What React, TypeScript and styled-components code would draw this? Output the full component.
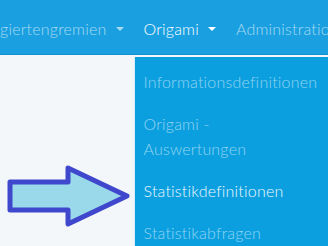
import React from "react";
import styled, { createGlobalStyle } from "styled-components";

const Global = createGlobalStyle`
  html, body { margin: 0; padding: 0; }
  body {
    background: #f4f7fa;
    font-family: "Lato", "Open Sans", sans-serif;
    width: 328px;
    height: 246px;
    overflow: hidden;
  }
`;

const Page = styled.div`
  position: relative;
  width: 328px;
  height: 246px;
  overflow: hidden;
`;

const NavBar = styled.nav`
  height: 55px;
  background: #1a9fe0;
  border-bottom: 1px solid #1590cf;
  display: flex;
  align-items: center;
  padding-top: 3px;
  box-sizing: border-box;
`;

const NavList = styled.ul`
  list-style: none;
  margin: 0 0 0 -43px;
  padding: 0;
  display: flex;
  align-items: center;
  white-space: nowrap;
`;

const NavItem = styled.li<{ $active?: boolean }>`
  position: relative;
  padding: 0 10px;
  font-size: 16px;
  font-weight: 300;
  letter-spacing: 0.2px;
  color: ${(p) => (p.$active ? "#ffffff" : "rgba(255,255,255,0.62)")};
  display: flex;
  align-items: center;
  gap: 9px;
`;

const Caret = styled.span`
  width: 0;
  height: 0;
  border-left: 4px solid transparent;
  border-right: 4px solid transparent;
  border-top: 4px solid currentColor;
  margin-top: 1px;
`;

const Dropdown = styled.ul`
  position: absolute;
  top: 38px;
  left: 0;
  width: 220px;
  margin: 0;
  padding: 3.5px 0;
  list-style: none;
  background: #0c9fe0;
  border-left: 1px solid #d7eefa;
`;

const DropItem = styled.li<{ $highlight?: boolean }>`
  padding: 8.5px 9px;
  font-size: 16px;
  font-weight: 300;
  letter-spacing: 0.2px;
  line-height: 25px;
  width: 165px;
  white-space: normal;
  color: ${(p) => (p.$highlight ? "#eef8fd" : "rgba(255,255,255,0.55)")};
`;

const Arrow = styled.svg`
  position: absolute;
  left: 0;
  top: 160px;
`;

export default function App() {
  return (
    <Page>
      <Global />
      <NavBar>
        <NavList>
          <NavItem>
            Delegiertengremien <Caret />
          </NavItem>
          <NavItem $active>
            Origami <Caret />
            <Dropdown>
              <DropItem>Informationsdefinitionen</DropItem>
              <DropItem>Origami - Auswertungen</DropItem>
              <DropItem $highlight>Statistikdefinitionen</DropItem>
              <DropItem>Statistikabfragen</DropItem>
            </Dropdown>
          </NavItem>
          <NavItem>Administration</NavItem>
        </NavList>
      </NavBar>
      <Arrow width="140" height="72" viewBox="0 160 140 72">
        <polygon
          points="10,182 68,182 68,168 127,196 68,224 68,210 10,210"
          fill="#99d9ea"
          stroke="#3f48cc"
          strokeWidth="5"
          strokeLinejoin="round"
        />
      </Arrow>
    </Page>
  );
}
